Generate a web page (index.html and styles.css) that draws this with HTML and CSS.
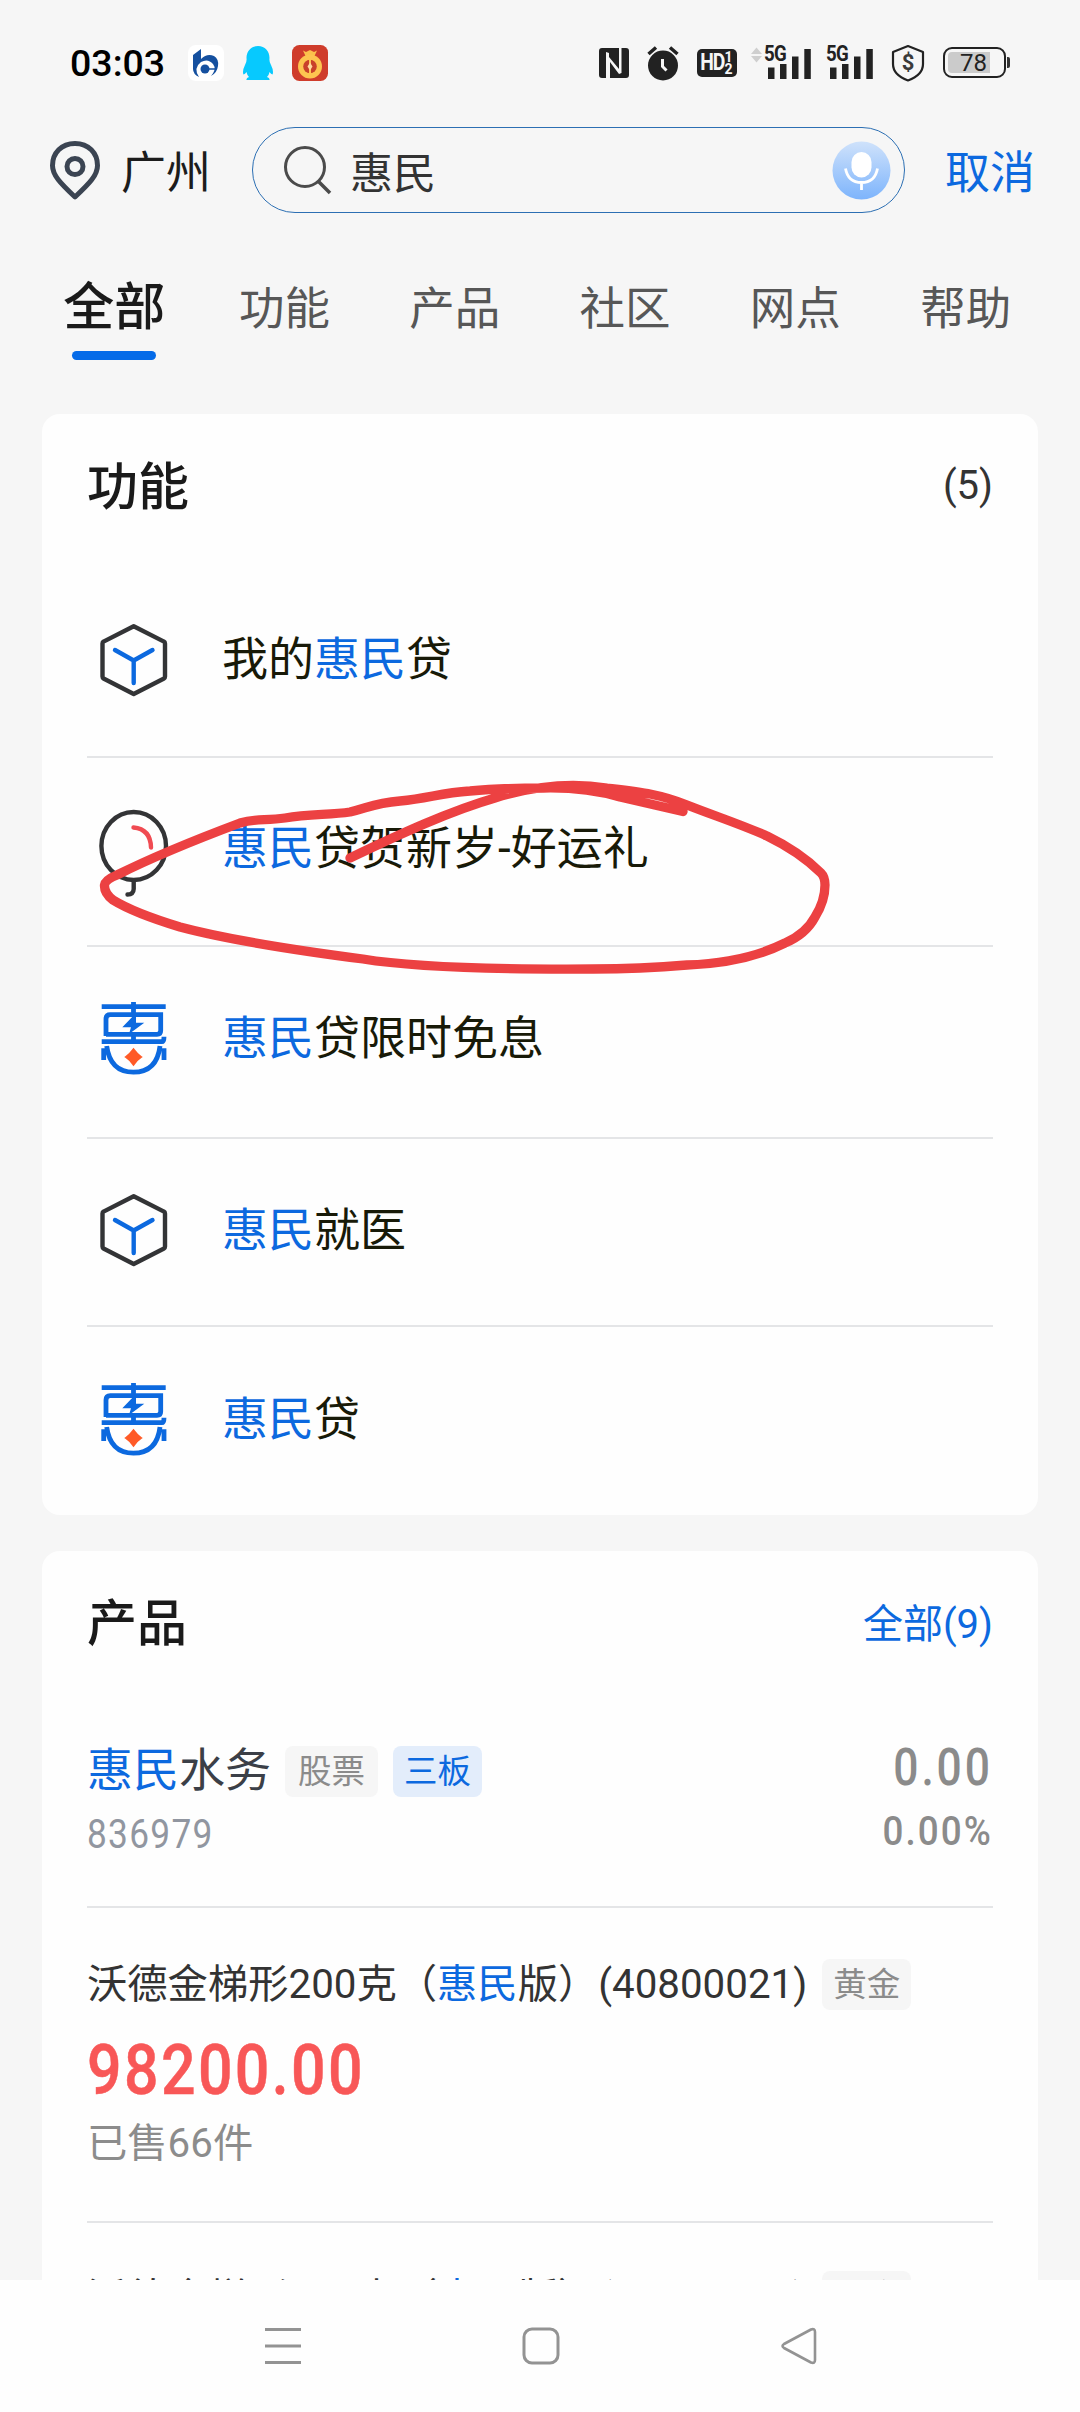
FILE: index.html
```html
<!DOCTYPE html>
<html lang="zh-CN">
<head>
<meta charset="utf-8">
<title>搜索</title>
<link rel="stylesheet" href="styles.css">
</head>
<body>
<svg class="defs" aria-hidden="true">
  <symbol id="i-cube" viewBox="0 0 68 76">
    <path d="M33.7 4.2 64 19.6Q65 20 65 21.500V54.500Q65 56 64 56.500L33.700 72 3.500 56.500Q2.500 56 2.500 54.500V21.500Q2.500 20 3.500 19.600Z" fill="none" stroke="#333436" stroke-width="4.400" stroke-linejoin="round"/>
    <path d="M15 28 33.700 38.500 52.500 28M33.700 38.500V61" fill="none" stroke="#0c69df" stroke-width="4.400" stroke-linecap="round" stroke-linejoin="round"/>
  </symbol>
  <symbol id="i-hui" viewBox="0 0 68 76">
    <g fill="none" stroke="#0c69df" stroke-width="4.800">
      <path d="M1.700 5.700H65.700M33.500 1V15M33.500 32V41M1.700 40.700H62Q64 40.700 64 35.700"/>
      <path d="M6 35V18Q6 13.700 10.300 13.700H60.700V29.500Q60.700 33.300 57 33.300H6"/>
      <path d="M3.700 47.300V59M64 47.300V59M6.700 45C9 62 18 71.200 33.400 71.200C49 71.200 58 62 60 45"/>
    </g>
    <path d="M36 12 22.300 26.300H31L29 33 44.300 21.700H36Z" fill="#0c69df"/>
    <path d="M33.500 48Q37 53 41.500 56Q37 59 33.500 64Q30 59 25.500 56Q30 53 33.500 48Z" fill="#ff5a26" stroke="#ff5a26" stroke-width="1.500"/>
  </symbol>
  <symbol id="i-bars" viewBox="0 0 48 34">
    <path d="M4 21.500h6.500V33H4zM16 18h6.500V33H16zM28 10.500h6.500V33H28zM40.300 3h6.500V33h-6.500z" fill="#222"/>
  </symbol>
</svg>
<div class="screen">
  <header class="status">
    <span class="clock">03:03</span>
    <svg class="app-bank" width="36" height="36" viewBox="0 0 36 36">
      <rect width="36" height="36" rx="8" fill="#fff"/>
      <path d="M5 10 13 4V14Q19 8 26 11Q31 14 30 21Q29 28 23 31Q29 24 25 19Q20 13 13 17Q5 23 11 32Q5 29 5 24Z" fill="#15509f"/>
      <circle cx="17" cy="24" r="4.500" fill="#15509f"/><path d="M17 24h10" stroke="#15509f" stroke-width="1.500"/>
    </svg>
    <svg class="app-qq" width="32" height="36" viewBox="0 0 32 36">
      <path d="M16 1C23 1 27.500 6 27.500 13Q27 17 29 20Q32 26 30.500 29.500Q29 29 27.500 27Q27 30 25 32Q28 33 27.500 35H4.500Q4 33 7 32Q5 30 4.500 27Q3 29 1.500 29.500Q0 26 3 20Q5 17 4.500 13C4.500 6 9 1 16 1Z" fill="#07c9fe"/>
    </svg>
    <svg class="app-purse" width="36" height="36" viewBox="0 0 36 36">
      <rect width="36" height="36" rx="7.500" fill="#cf3c2b"/>
      <path d="M11 5.500 14 7 18 5 22 7 25 5.500 22.500 11H13.500Z" fill="#fbc04b"/>
      <circle cx="18" cy="21.500" r="12" fill="#fdc450"/>
      <circle cx="18" cy="21.500" r="6.800" fill="#c9402b"/>
      <path d="M18 14V29" stroke="#fdc450" stroke-width="2"/><path d="M18 17.500 20.500 21.500 18 25.500 15.500 21.500Z" fill="#ffd9a0"/>
    </svg>
    <span class="spacer"></span>
    <svg class="s-nfc" width="30" height="32" viewBox="0 0 30 32">
      <path d="M3 1H20V22L10 10V6L7 5V31H3Q0 31 0 28V4Q0 1 3 1ZM22.500 1H27Q30 1 30 4V28Q30 31 27 31H11V15L20 27 22.500 26Z" fill="#222"/>
    </svg>
    <svg class="s-alarm" width="32" height="36" viewBox="0 0 32 36">
      <circle cx="16" cy="20.500" r="15" fill="#222"/>
      <path d="M1.500 9 9 2.500M30.500 9 23 2.500" stroke="#222" stroke-width="3.500"/>
      <path d="M15.500 14V21.500L19.500 25.500" fill="none" stroke="#f6f6f6" stroke-width="3"/>
    </svg>
    <span class="s-hd"><b>HD</b><span class="sub"><i>1</i><i>2</i></span></span>
    <svg class="s-arrows" width="11" height="34" viewBox="0 0 11 34"><path d="M0 8 5.500 1.500 11 8ZM0 10 5.500 16.500 11 10Z" fill="#cfcfcf"/></svg>
    <span class="sig"><svg width="48" height="34"><use href="#i-bars"/></svg><b>5G</b></span>
    <span class="sig sig2"><svg width="48" height="34"><use href="#i-bars"/></svg><b>5G</b></span>
    <span class="shield"><svg width="34" height="38" viewBox="0 0 34 38"><path d="M17 2 32 8V20Q32 31 17 36.500Q2 31 2 20V8Z" fill="none" stroke="#222" stroke-width="2.200" stroke-linejoin="round"/></svg><b>$</b></span>
    <span class="battery"><span class="level">78</span></span><span class="tip"></span>
  </header>

  <div class="search-row">
    <svg class="pin" width="52" height="60" viewBox="0 0 52 60">
      <path d="M26 3.500C12.500 3.500 3.500 13 3.500 25.500C3.500 35 11 43 26 57C41 43 48.500 35 48.500 25.500C48.500 13 39.500 3.500 26 3.500Z" fill="none" stroke="#3b4452" stroke-width="5" stroke-linejoin="round"/>
      <circle cx="26" cy="26.500" r="8" fill="none" stroke="#3b4452" stroke-width="5"/>
    </svg>
    <span class="city">广州</span>
    <div class="search">
      <svg width="48" height="48" viewBox="0 0 48 48"><circle cx="21" cy="21" r="19.500" fill="none" stroke="#4b4b4b" stroke-width="3"/><path d="M34.500 35.500 46 47" stroke="#4b4b4b" stroke-width="3.500"/></svg>
      <span class="query">惠民</span>
      <svg class="mic" width="59" height="59" viewBox="0 0 59 59">
        <defs><linearGradient id="g" x1="0" y1="0" x2="0" y2="1"><stop offset="0" stop-color="#cfe2fb"/><stop offset="1" stop-color="#7db4fc"/></linearGradient></defs>
        <circle cx="29.500" cy="29.500" r="29" fill="url(#g)"/>
        <rect x="19.500" y="11" width="20" height="25.500" rx="10" fill="#fff"/>
        <path d="M13.500 27.500Q16 41.500 29.500 41.500Q43 41.500 45.500 27.500M29.500 41.500V49" fill="none" stroke="#fff" stroke-width="2.800"/>
      </svg>
    </div>
    <span class="cancel">取消</span>
  </div>

  <nav class="tabs">
    <span class="tab active">全部</span><span class="tab">功能</span><span class="tab">产品</span><span class="tab">社区</span><span class="tab">网点</span><span class="tab">帮助</span>
  </nav>

  <main class="content">
    <section class="card features">
      <div class="card-head"><h2>功能</h2><span class="count">(5)</span></div>
      <div class="feature"><svg width="68" height="76"><use href="#i-cube"/></svg><span>我的<em>惠民</em>贷</span></div>
      <div class="feature second">
        <svg width="72" height="88" viewBox="0 0 72 88">
          <ellipse cx="35.700" cy="37" rx="32.300" ry="34" fill="none" stroke="#333436" stroke-width="4.400"/>
          <path d="M35.700 73V80Q35.500 85.500 29.500 85.500" fill="none" stroke="#333436" stroke-width="4.400" stroke-linecap="round"/>
          <path d="M35.500 18.500Q52.500 20 53 38.500" fill="none" stroke="#f04b52" stroke-width="4.400" stroke-linecap="round"/>
        </svg>
        <span><em>惠民</em>贷贺新岁-好运礼</span>
        <svg class="scribble" width="740" height="200" viewBox="96 776 740 200">
          <path d="M350 858C400 834 450 811 495 798C540 784 575 783 607 788C640 792 660 794 687 805C715 816 740 824 767 836Q800 852 821 873Q825 877 825 885Q825 901 815 917Q806 934 785 943Q745 963 687 965Q640 969 593 969Q430 970 363 959Q240 943 180 927Q134 913 113 900Q104 893 104.500 885Q105 880 117 875C155 856 200 838 240 823C256 818 265 821 285 818C310 814 330 815 350 812C370 807 375 803 400 801C430 798 440 793 470 791Q500 788 543 788Q585 787 620 797L683 811.500" fill="none" stroke="#ec4142" stroke-width="9.300" stroke-linecap="round" stroke-linejoin="round"/>
        </svg>
      </div>
      <div class="feature third"><svg width="68" height="76"><use href="#i-hui"/></svg><span><em>惠民</em>贷限时免息</span></div>
      <div class="feature fourth"><svg width="68" height="76"><use href="#i-cube"/></svg><span><em>惠民</em>就医</span></div>
      <div class="feature"><svg width="68" height="76"><use href="#i-hui"/></svg><span><em>惠民</em>贷</span></div>
    </section>

    <section class="card products">
      <div class="card-head"><h2>产品</h2><span class="count link">全部(9)</span></div>
      <div class="stock">
        <div>
          <div class="name"><span class="stock-name"><em>惠民</em>水务</span><span class="tag wide">股票</span><span class="tag blue">三板</span></div>
          <div class="code">836979</div>
        </div>
        <div class="quote"><div class="last">0.00</div><div class="change">0.00%</div></div>
      </div>
      <div class="gold">
        <div class="name"><span class="title">沃德金梯形200克（<em>惠民</em>版）(40800021)</span><span class="tag">黄金</span></div>
        <div class="price">98200.00</div>
        <div class="sold">已售66件</div>
      </div>
      <div class="gold next">
        <div class="name"><span class="title">沃德金梯形200克（<em>惠民</em>版）(40800021)</span><span class="tag">黄金</span></div>
      </div>
    </section>
  </main>

  <footer class="sysnav">
    <svg width="36" height="38" viewBox="0 0 36 38"><path d="M0 2.500H36M0 19H36M0 35.500H36" stroke="#939393" stroke-width="3"/></svg>
    <svg width="38" height="38" viewBox="0 0 38 38"><rect x="2" y="2" width="34" height="34" rx="8" fill="none" stroke="#939393" stroke-width="3"/></svg>
    <svg width="36" height="38" viewBox="0 0 36 38"><path d="M3 17 30 2.500Q34 1 34 5V33Q34 37 30 35.500L3 21Q0 19 3 17Z" fill="none" stroke="#939393" stroke-width="2.600" stroke-linejoin="round"/></svg>
  </footer>
</div>
</body>
</html>
```
FILE: styles.css
```css
* { box-sizing: border-box; }
body { margin: 0; background: #f6f6f6; font-family: Roboto, "Noto Sans CJK SC", sans-serif; color: #333; }
svg { display: block; flex: none; overflow: visible; }
em, i { font-style: normal; }
em { color: #0c69df; }
.defs { position: absolute; width: 0; height: 0; }
.screen { width: 1080px; height: 2412px; display: flex; flex-direction: column; overflow: hidden; background: #f6f6f6; }

/* status bar */
.status { height: 127px; flex: none; padding: 0 70px 2px; display: flex; align-items: center; white-space: nowrap; }
.clock { width: 118px; font-size: 37.500px; font-weight: 500; color: #000; line-height: 44px; }
.app-qq { margin-left: 18px; }
.app-purse { margin-left: 18px; }
.spacer { flex: 1; }
.s-nfc { margin-right: 1px; }
.s-alarm { margin-left: 17px; }
.s-hd { margin-left: 18px; width: 40px; height: 28px; border-radius: 5px; background: #222; color: #f6f6f6; display: flex; align-items: center; justify-content: center; gap: 1px; }
.s-hd b { font-size: 23px; line-height: 28px; letter-spacing: -1.5px; transform: scaleX(.84); margin: 0 -3px; }
.sub { display: flex; flex-direction: column; font-size: 14px; line-height: 12px; font-weight: 700; }
.s-arrows { margin-left: 14px; }
.sig { margin-left: 2px; position: relative; width: 48px; }
.sig2 { margin-left: 14px; }
.sig b { position: absolute; left: 0; top: -3px; font-size: 22px; line-height: 22px; letter-spacing: -1px; transform: scaleX(.85); transform-origin: left; color: #222; }
.shield { margin-left: 17px; position: relative; width: 34px; }
.shield b { position: absolute; left: 0; top: 7px; width: 34px; text-align: center; font-size: 22px; line-height: 24px; color: #3a3a3a; }
.battery { margin-left: 18px; width: 63px; height: 31px; border: 2px solid #222; border-radius: 9px; padding: 3px; }
.level { display: block; width: 42px; height: 21px; border-radius: 4px 0 0 4px; background: #cbcbcb; font-size: 24px; line-height: 22px; color: #222; padding-left: 12px; }
.tip { width: 3px; height: 11px; margin-left: 1px; background: #333; border-radius: 0 2px 2px 0; }

/* search */
.search-row { height: 86px; flex: none; display: flex; align-items: center; padding-left: 49px; }
.city { width: 131px; margin-left: 20px; padding-top: 7px; font-size: 45px; line-height: 60px; color: #1c1c1c; }
.search { width: 653px; height: 86px; border: 1px solid #2c6fb3; border-radius: 43px; display: flex; align-items: center; padding: 0 13px 0 31px; }
.query { flex: 1; margin-left: 18px; padding-top: 7px; font-size: 43px; line-height: 60px; color: #333; }
.cancel { margin-left: 40px; padding-top: 7px; font-size: 45px; line-height: 60px; color: #0c69df; }

/* category tabs */
.tabs { height: 201px; flex: none; display: grid; grid-template-columns: repeat(6, 170.300px); padding: 64px 29px 0; }
.tab { font-size: 45.500px; line-height: 65px; color: #575757; text-align: center; }
.tab.active { font-size: 51px; line-height: 61px; font-weight: 500; color: #1a1a1a; }
.tab.active::after { content: ""; display: block; width: 84px; height: 9px; margin: 13px auto 0; border-radius: 5px; background: #056be8; }

.content { flex: 1; min-height: 0; overflow: hidden; padding: 0 42px; }
.card { background: #fefefe; border-radius: 18px; padding: 0 45px; }
.features { height: 1101px; }
.products { margin-top: 36px; height: 900px; }
.card-head { height: 154px; display: flex; justify-content: space-between; align-items: flex-start; padding-top: 43px; }
h2 { margin: 0; font-size: 51px; line-height: 62px; font-weight: 500; color: #1a1a1a; }
.count { font-size: 40px; line-height: 58px; color: #333; }
.count.link { color: #0c69df; line-height: 64px; }

.feature { height: 189px; border-bottom: 2px solid #e4e5e7; display: flex; align-items: flex-start; padding: 54px 0 0 13px; font-size: 46px; line-height: 60px; color: #181a08; position: relative; white-space: nowrap; }
.card-head + .feature { height: 190px; }
.feature > span { margin: 7px 0 0 54px; }
.feature.second { padding-left: 11px; padding-top: 51px; }
.feature.second > span { margin: 9px 0 0 52px; }
.feature.third { height: 192px; }
.feature.fourth { height: 188px; padding-top: 53px; }
.feature.fourth > span { margin-top: 8px; }
.feature:last-child { border-bottom: 0; padding-top: 55px; }
.scribble { position: absolute; left: 9px; top: 18px; z-index: 2; }

.products .card-head { height: 182px; padding-top: 42px; }
.products h2 { font-size: 50px; }
.name { display: flex; align-items: center; white-space: nowrap; }
.stock { height: 175px; border-bottom: 2px solid #e4e5e7; display: flex; justify-content: space-between; padding-top: 10px; }
.stock-name { font-size: 46px; line-height: 54px; padding-bottom: 2px; color: #3b3f47; margin-right: 14px; }
.tag { height: 51px; padding: 0 11px; border-radius: 8px; background: #f6f6f6; color: #8b8b8b; font-size: 33.500px; line-height: 51px; }
.tag.wide { padding: 0 13px; margin-right: 15px; }
.tag.blue { background: #e3edfb; color: #0c69df; }

/* narrow, widely tracked numerals */
.code, .last, .change, .price { transform: scaleX(.87); transform-origin: left; }
.code { font-size: 40.500px; line-height: 48px; font-weight: 400; letter-spacing: 1.500px; color: #9196a0; margin-top: 11px; }
.quote { text-align: right; font-weight: 500; color: #8b8b8b; }
.last, .change { transform-origin: right; }
.last { font-size: 51px; line-height: 56px; letter-spacing: 3.300px; margin: -3px 0 0 0; }
.change { font-size: 40px; line-height: 48px; letter-spacing: 2.200px; margin: 12px 0 0 0; transform: scaleX(.92); }
.gold { height: 315px; border-bottom: 2px solid #e4e5e7; padding-top: 51px; }
.gold .name { font-size: 40.300px; line-height: 51px; color: #333; }
.gold .name .title { padding-top: 1px; line-height: 50px; }
.gold .name .tag { margin-left: 15px; }
.gold.next { padding-top: 48px; }
.gold.next .title { padding-top: 5px; line-height: 46px; }
.price { font-size: 70px; line-height: 80px; font-weight: 500; letter-spacing: 2.700px; color: #f85757; margin-top: 20px; -webkit-text-stroke: .5px #f85757; }
.sold { font-size: 40.300px; line-height: 50px; color: #8c8c8c; margin-top: 9px; }

.sysnav { height: 132px; flex: none; background: #fefefe; display: flex; justify-content: space-between; padding: 47px 263px 0 265px; }
```
